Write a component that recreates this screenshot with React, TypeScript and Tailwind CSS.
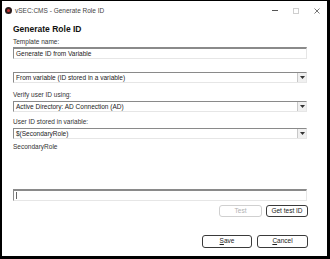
const font = { fontFamily: '"Liberation Sans", Arial, sans-serif' };

function Combo({ value, className = "" }: { value: string; className?: string }) {
  return (
    <div
      className={`flex h-[11px] w-[294px] items-stretch border border-[#8a8a8a] border-b-[#e6e6e6] border-r-[#e6e6e6] bg-white ${className}`}
    >
      <span className="flex-1 truncate pl-[2px] text-[6.5px] leading-[9px] text-[#222]">{value}</span>
      <span className="flex w-[9px] items-center justify-center border-l border-[#c8c8c8] bg-[#f0f0f0]">
        <svg width="5" height="3" viewBox="0 0 5 3">
          <path d="M0 0h5L2.5 3z" fill="#333" />
        </svg>
      </span>
    </div>
  );
}

function Btn({ label, disabled, className = "" }: { label: React.ReactNode; disabled?: boolean; className?: string }) {
  return (
    <button
      className={`flex items-center justify-center rounded-[3px] border bg-white text-[6.5px] leading-none ${
        disabled ? "border-[#d0d0d0] text-[#b0b0b0]" : "border-[#3a3a3a] text-[#222]"
      } ${className}`}
    >
      {label}
    </button>
  );
}

export default function App() {
  return (
    <div className="h-[259px] w-[330px] bg-black pb-[3px] pl-[2px] pr-[3px] pt-[1px]" style={font}>
      <div className="flex h-full w-full flex-col bg-white">
        {/* title bar */}
        <div className="flex h-[19px] items-center pl-[3px] pr-[7px]">
          <span className="flex h-[7px] w-[7px] items-center justify-center rounded-full bg-[#2a1a1a]">
            <span className="h-[3px] w-[3px] rounded-full bg-[#c03030]" />
          </span>
          <span className="ml-[3px] text-[6.5px] text-[#444]">vSEC:CMS - Generate Role ID</span>
          <span className="ml-auto flex items-center gap-[15px]">
            <span className="h-px w-[6px] bg-[#555]" />
            <span className="h-[6px] w-[6px] border border-[#cfcfcf]" />
            <svg width="6" height="6" viewBox="0 0 6 6">
              <path d="M0.5 0.5l5 5M5.5 0.5l-5 5" stroke="#777" strokeWidth="1" />
            </svg>
          </span>
        </div>

        <div className="flex flex-col pl-[11px]">
          <div className="mt-[4px] text-[8.5px] font-bold leading-[11px] text-[#111]">Generate Role ID</div>
          <div className="mt-[2px] text-[6.5px] leading-[9px] text-[#333]">Template name:</div>
          <div className="mt-[1px] h-[12px] w-[294px] border border-[#8a8a8a] border-b-[#e6e6e6] border-r-[#e6e6e6] border-t-2 pl-[2px] text-[6.5px] leading-[9px] text-[#222]">
            Generate ID from Variable
          </div>

          <Combo value="From variable (ID stored in a variable)" className="mt-[13px]" />

          <div className="mt-[7px] text-[6.5px] leading-[9px] text-[#333]">Verify user ID using:</div>
          <Combo value="Active Directory: AD Connection (AD)" className="mt-[2px]" />

          <div className="mt-[5px] text-[6.5px] leading-[9px] text-[#333]">User ID stored in variable:</div>
          <Combo value="$(SecondaryRole)" className="mt-[2px]" />

          <div className="mt-[3px] text-[6.5px] leading-[9px] text-[#333]">SecondaryRole</div>

          <div className="mt-[38px] flex h-[12px] w-[294px] items-center border border-[#8a8a8a] border-b-[#e6e6e6] border-r-[#e6e6e6] border-t-2 pl-[2px]">
            <span className="h-[7px] w-px bg-[#666]" />
          </div>

          <div className="mt-[4px] flex w-[295px] justify-end gap-[4px]">
            <Btn label="Test" disabled className="h-[12px] w-[43px]" />
            <Btn label="Get test ID" className="h-[12px] w-[42px]" />
          </div>

          <div className="mt-[18px] flex w-[295px] justify-end gap-[5px]">
            <Btn label={<><u>S</u>ave</>} className="h-[13px] w-[50px]" />
            <Btn label={<><u>C</u>ancel</>} className="h-[13px] w-[51px]" />
          </div>
        </div>
      </div>
    </div>
  );
}
